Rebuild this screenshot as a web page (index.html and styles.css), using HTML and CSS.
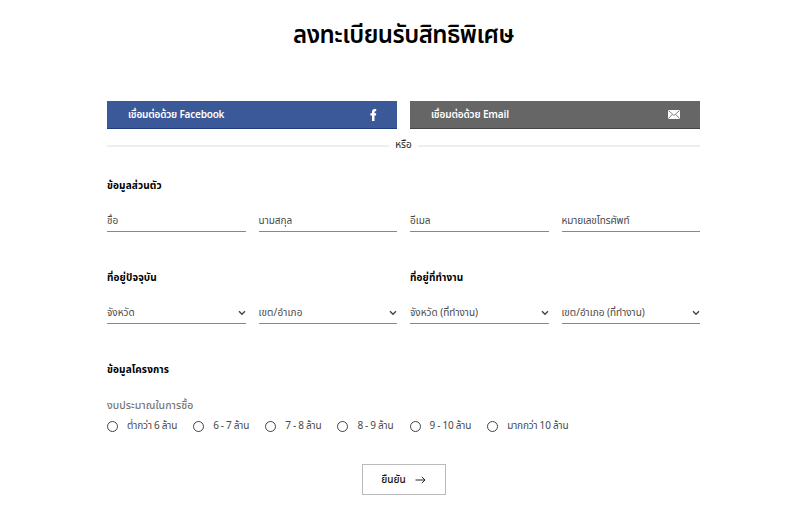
FILE: index.html
```html
<!DOCTYPE html>
<html lang="th">
<head>
    <meta charset="utf-8">
    <title>ลงทะเบียนรับสิทธิพิเศษ</title>
    <link rel="stylesheet" href="styles.css">
</head>
<body>
    <div class="container">
        <h1>ลงทะเบียนรับสิทธิพิเศษ</h1>
        <div class="social">
            <a class="btn facebook">
                <span>เชื่อมต่อด้วย Facebook</span>
                <svg width="7" height="12" viewBox="0 0 7 12"><path fill="#fff" d="M2 12V6.600H.4V4.300H2V2.900C2 1 3.100 0 4.600 0H6.200V2.200H5.300C4.700 2.200 4.500 2.500 4.500 3.200V4.300H6.200L6 6.600H4.500V12Z"/></svg>
            </a>
            <a class="btn email">
                <span>เชื่อมต่อด้วย Email</span>
                <svg width="12" height="9" viewBox="0 0 12 9"><rect width="12" height="9" rx="1" fill="#fff"/><path d="M.6.7 6 5.500 11.400.7M.6 8.400 4.400 4.300M11.400 8.400 7.600 4.300" fill="none" stroke="#666" stroke-width=".8"/></svg>
            </a>
        </div>
        <div class="or"><span>หรือ</span></div>

        <h2>ข้อมูลส่วนตัว</h2>
        <div class="row">
            <div class="field"><span>ชื่อ</span></div>
            <div class="field"><span>นามสกุล</span></div>
            <div class="field"><span>อีเมล</span></div>
            <div class="field"><span class="phone">หมายเลขโทรศัพท์</span></div>
        </div>

        <div class="heads">
            <h2>ที่อยู่ปัจจุบัน</h2>
            <h2>ที่อยู่ที่ทำงาน</h2>
        </div>
        <div class="row">
            <div class="field select"><span>จังหวัด</span><svg width="8" height="6" viewBox="0 0 8 6"><path d="M1 1.200 4 4.200 7 1.200"/></svg></div>
            <div class="field select"><span class="district">เขต/อำเภอ</span><svg width="8" height="6" viewBox="0 0 8 6"><path d="M1 1.200 4 4.200 7 1.200"/></svg></div>
            <div class="field select"><span>จังหวัด (ที่ทำงาน)</span><svg width="8" height="6" viewBox="0 0 8 6"><path d="M1 1.200 4 4.200 7 1.200"/></svg></div>
            <div class="field select"><span>เขต/อำเภอ (ที่ทำงาน)</span><svg width="8" height="6" viewBox="0 0 8 6"><path d="M1 1.200 4 4.200 7 1.200"/></svg></div>
        </div>

        <h2>ข้อมูลโครงการ</h2>
        <div class="budget">งบประมาณในการซื้อ</div>
        <div class="radios">
            <label><i class="circle"></i><span>ต่ำกว่า 6 ล้าน</span></label>
            <label><i class="circle"></i><span>6 - 7 ล้าน</span></label>
            <label><i class="circle"></i><span>7 - 8 ล้าน</span></label>
            <label><i class="circle"></i><span>8 - 9 ล้าน</span></label>
            <label><i class="circle"></i><span>9 - 10 ล้าน</span></label>
            <label><i class="circle"></i><span>มากกว่า 10 ล้าน</span></label>
        </div>
        <button class="submit"><span>ยืนยัน</span><svg width="11" height="8" viewBox="0 0 11 8"><path d="M.5 4H10M6.800.8 10 4 6.800 7.200" fill="none" stroke="#222" stroke-width="1"/></svg></button>
    </div>
</body>
</html>
```

FILE: styles.css
```css
body {
    margin: 0;
    background-color: #fff;
    color: #484848;
    font-family: "Noto Sans Thai", "Noto Sans", sans-serif;
    font-size: 10px;
    line-height: 16px;
}
span {
    white-space: nowrap;
}
.container {
    width: 593px;
    margin-left: 107px;
    padding-top: 19px;
}
h1 {
    margin: 0 0 48px;
    height: 34px;
    line-height: 34px;
    font-size: 24px;
    font-weight: 600;
    letter-spacing: -0.5px;
    color: #000;
    text-align: center;
}
.social, .heads {
    display: grid;
    grid-template-columns: 1fr 1fr;
    column-gap: 13px;
}
.btn {
    display: flex;
    align-items: center;
    justify-content: space-between;
    box-sizing: border-box;
    height: 28px;
    padding: 0 20px 0 21px;
    color: #fff;
    font-weight: 600;
}
.facebook {
    background-color: #3b5998;
    border-bottom: 1px solid #1e3d80;
    letter-spacing: -0.2px;
}
.email {
    background-color: #666;
    border-bottom: 1px solid #444;
    letter-spacing: -0.15px;
}
.or {
    display: flex;
    align-items: center;
    gap: 6px;
    height: 16px;
    margin-top: 8px;
    color: #222;
}
.or::before, .or::after {
    content: "";
    flex: 1;
    height: 2px;
    margin-top: 2px;
    background-color: #eee;
}
h2 {
    margin: 25px 0 0;
    height: 16px;
    font-size: 10px;
    line-height: 16px;
    font-weight: 700;
    letter-spacing: 0.12px;
    color: #000;
}
.row {
    display: grid;
    grid-template-columns: repeat(4, 1fr);
    column-gap: 13px;
    margin-top: 17px;
}
.field {
    display: flex;
    align-items: center;
    justify-content: space-between;
    box-sizing: border-box;
    height: 21px;
    padding-bottom: 1px;
    border-bottom: 1px solid #888;
}
.phone {
    letter-spacing: -0.12px;
}
.district {
    letter-spacing: 0.15px;
}
.heads h2 {
    margin-top: 38px;
}
.select path {
    fill: none;
    stroke: #444;
    stroke-width: 1.4;
}
.row + h2 {
    margin-top: 38px;
}
.budget {
    margin-top: 20px;
    color: #777;
    font-size: 10.5px;
    font-weight: 500;
    letter-spacing: 0.05px;
}
.radios {
    display: flex;
    gap: 16px;
    margin-top: 4px;
    letter-spacing: -0.15px;
    word-spacing: -0.3px;
}
.radios label {
    display: flex;
    align-items: center;
    gap: 9px;
}
.circle {
    box-sizing: border-box;
    width: 11px;
    height: 11px;
    border: 1px solid #444;
    border-radius: 50%;
}
.submit {
    display: flex;
    align-items: center;
    justify-content: center;
    gap: 9px;
    width: 84px;
    height: 31px;
    margin: 30px auto 0;
    padding: 0;
    border: 1px solid #bbb;
    background-color: #fff;
    color: #111;
    font-family: inherit;
    font-size: 10px;
    font-weight: 500;
}
```
